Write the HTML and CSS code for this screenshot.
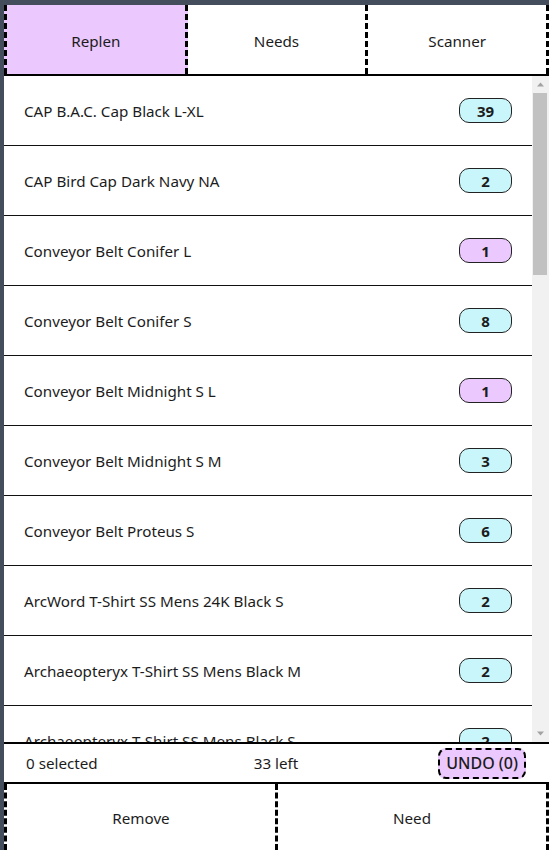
FILE: index.html
```html
<!DOCTYPE html>
<html lang="en">
<head>
<meta charset="utf-8">
<title>Replen</title>
<link rel="stylesheet" href="styles.css">
</head>
<body>
<div class="app">
  <nav class="tabs">
    <div class="tab active">Replen</div>
    <div class="tab">Needs</div>
    <div class="tab">Scanner</div>
  </nav>
  <div class="list-wrap">
    <ul class="list">
      <li class="row"><span class="name">CAP B.A.C. Cap Black L-XL</span><span class="badge">39</span></li>
      <li class="row"><span class="name">CAP Bird Cap Dark Navy NA</span><span class="badge">2</span></li>
      <li class="row"><span class="name">Conveyor Belt Conifer L</span><span class="badge low">1</span></li>
      <li class="row"><span class="name">Conveyor Belt Conifer S</span><span class="badge">8</span></li>
      <li class="row"><span class="name">Conveyor Belt Midnight S L</span><span class="badge low">1</span></li>
      <li class="row"><span class="name">Conveyor Belt Midnight S M</span><span class="badge">3</span></li>
      <li class="row"><span class="name">Conveyor Belt Proteus S</span><span class="badge">6</span></li>
      <li class="row"><span class="name">ArcWord T-Shirt SS Mens 24K Black S</span><span class="badge">2</span></li>
      <li class="row"><span class="name">Archaeopteryx T-Shirt SS Mens Black M</span><span class="badge">2</span></li>
      <li class="row"><span class="name">Archaeopteryx T-Shirt SS Mens Black S</span><span class="badge">2</span></li>
    </ul>
    <div class="scrollbar" aria-hidden="true">
      <div class="sb-btn">
        <svg width="17" height="17" viewBox="0 0 17 17"><polygon points="5,10.5 8.5,6.5 12,10.5" fill="#a3a3a3"/></svg>
      </div>
      <div class="sb-track"><div class="sb-thumb"></div></div>
      <div class="sb-btn">
        <svg width="17" height="17" viewBox="0 0 17 17"><polygon points="5,6.5 8.5,10.5 12,6.5" fill="#a3a3a3"/></svg>
      </div>
    </div>
  </div>
  <div class="status">
    <span class="selected">0 selected</span>
    <span class="left">33 left</span>
    <button class="undo">UNDO (0)</button>
  </div>
  <div class="actions">
    <button class="action">Remove</button>
    <button class="action">Need</button>
  </div>
</div>
</body>
</html>
```

FILE: styles.css
```css
* { box-sizing: border-box; }

html, body {
  margin: 0;
  height: 100%;
}

body {
  background: #434d5c;
  padding: 5px 0 0 4px;
  font-family: "Noto Sans", "Open Sans", sans-serif;
  font-size: 15.2px;
  color: #1c1c1c;
  overflow: hidden;
}

.app {
  background: #fff;
  height: 845px;
  display: flex;
  flex-direction: column;
}

.tabs {
  display: flex;
  height: 71px;
  border-bottom: 2px solid #000;
  flex: none;
}

.tab {
  flex: 1;
  display: flex;
  align-items: center;
  justify-content: center;
  padding-top: 2px;
  border-right: 3px dashed #000;
}

.tab:first-child { border-left: 3px dashed #000; }

.tab.active { background: #ebc8fd; }

.list-wrap {
  flex: 1;
  min-height: 0;
  display: flex;
}

.list {
  list-style: none;
  margin: 0;
  padding: 0;
  flex: 1;
  min-width: 0;
  overflow: hidden;
}

.row {
  height: 70px;
  border-bottom: 1px solid #111;
  display: flex;
  align-items: center;
  justify-content: space-between;
  padding: 0 20px;
}

.badge {
  width: 53px;
  height: 25px;
  border: 1px solid #222;
  border-radius: 10px;
  background: #c9f6fb;
  display: flex;
  align-items: center;
  justify-content: center;
  font-weight: 700;
  font-size: 15px;
}

.badge.low { background: #ebc8fd; }

.scrollbar {
  width: 17px;
  flex: none;
  background: #f1f1f1;
  display: flex;
  flex-direction: column;
}

.sb-btn {
  height: 17px;
  flex: none;
}

.sb-btn svg { display: block; }

.sb-track {
  flex: 1;
  padding: 0 2px 0 1px;
}

.sb-thumb {
  height: 182px;
  background: #c1c1c1;
}

.status {
  flex: none;
  height: 40px;
  border-top: 2px solid #000;
  display: grid;
  grid-template-columns: 1fr 1fr 1fr;
  align-items: center;
  padding: 0 23px 0 22px;
}

.left { text-align: center; }

.undo {
  justify-self: end;
  font: inherit;
  font-size: 16px;
  font-weight: 500;
  color: #1c1c1c;
  background: #ebc8fd;
  border: 2px dashed #000;
  border-radius: 8px;
  padding: 0 6px;
  height: 31px;
}

.actions {
  flex: none;
  height: 68px;
  border-top: 2px solid #000;
  display: flex;
}

.action {
  flex: 1;
  font: inherit;
  color: #1c1c1c;
  background: #fff;
  border: 0;
  padding-top: 3px;
  border-right: 3px dashed #000;
}

.action:first-child { border-left: 3px dashed #000; }
```
